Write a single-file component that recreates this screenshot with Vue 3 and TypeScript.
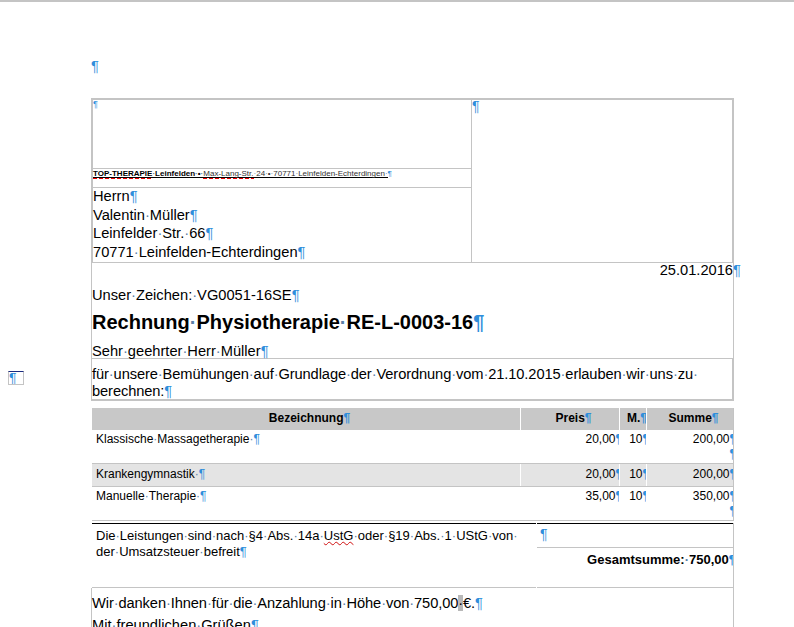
<script setup lang="ts">
import { h, type FunctionalComponent } from 'vue'

// Renders text with Word's formatting marks (spaces and pilcrows) picked out in blue.
const T: FunctionalComponent<{ t: string }> = (props) =>
  props.t.split(/([·¶])/).filter(Boolean).map((part) =>
    part === '·'
      ? h('span', { class: 'dot' }, '·')
      : part === '¶'
        ? h('span', { class: 'mark' }, '¶')
        : part
  )

const rows = [
  { name: 'Klassische·Massagetherapie·¶', price: '20,00¶', qty: '10¶', sum: '200,00¶', tall: true, shade: false },
  { name: 'Krankengymnastik·¶', price: '20,00¶', qty: '10¶', sum: '200,00¶', tall: false, shade: true },
  { name: 'Manuelle·Therapie·¶', price: '35,00¶', qty: '10¶', sum: '350,00¶', tall: true, shade: false }
]
</script>

<template>
  <div class="screen">
    <div class="top-rule"></div>
    <div class="margin-frame"><span class="mark">¶</span></div>
    <main class="page">
      <p class="first-mark"><span class="mark">¶</span></p>

      <section class="head-table">
        <div class="sender">
          <div class="logo-cell"><span class="mark tiny">¶</span></div>
          <div class="return-line">
            <span class="under bold"><span class="dash">TOP-THERAPIE</span><T t="·Leinfelden·•·" /></span>
            <span class="under soft"><span class="dash">Max-Lang-Str.</span><T t="·24·•·70771·Leinfelden-Echterdingen·" /></span><span class="mark">¶</span>
          </div>
          <div class="address">
            <div><T t="Herrn¶" /></div>
            <div><T t="Valentin·Müller¶" /></div>
            <div><T t="Leinfelder·Str.·66¶" /></div>
            <div><T t="70771·Leinfelden-Echterdingen¶" /></div>
          </div>
        </div>
        <div class="recipient"><span class="mark">¶</span></div>
      </section>

      <section class="letter-head">
        <div class="date"><span>25.01.2016</span><span class="mark hang">¶</span></div>
        <div class="ref"><T t="Unser·Zeichen:·VG0051-16SE¶" /></div>
        <h1><T t="Rechnung·Physiotherapie·RE-L-0003-16¶" /></h1>
        <div class="salute"><T t="Sehr·geehrter·Herr·Müller¶" /></div>
      </section>

      <section class="intro">
        <div><T t="für·unsere·Bemühungen·auf·Grundlage·der·Verordnung·vom·21.10.2015·erlauben·wir·uns·zu·" /></div>
        <div><T t="berechnen:¶" /></div>
      </section>

      <section class="items">
        <div class="row header">
          <div class="c name"><T t="Bezeichnung¶" /></div>
          <div class="c price"><T t="Preis¶" /></div>
          <div class="c qty"><T t="M.¶" /></div>
          <div class="c sum"><T t="Summe¶" /></div>
        </div>
        <div v-for="r in rows" :key="r.name" class="row" :class="{ tall: r.tall, shade: r.shade }">
          <div class="c name"><T :t="r.name" /></div>
          <div class="c price"><T :t="r.price" /></div>
          <div class="c qty"><T :t="r.qty" /></div>
          <div class="c sum">
            <T :t="r.sum" />
            <div v-if="r.tall" class="extra"><span class="mark">¶</span></div>
          </div>
        </div>
      </section>

      <section class="totals">
        <div class="note">
          <div class="note-line"><T t="Die·Leistungen·sind·nach·§4·Abs.·14a·" /><span class="wavy">UstG</span><T t="·oder·§19·Abs.·1·UStG·von·" /></div>
          <div class="note-line"><T t="der·Umsatzsteuer·befreit¶" /></div>
        </div>
        <div class="total-col">
          <div class="empty"><span class="mark">¶</span></div>
          <div class="grand"><T t="Gesamtsumme:·750,00¶" /></div>
        </div>
      </section>

      <section class="closing">
        <div class="thanks"><T t="Wir·danken·Ihnen·für·die·Anzahlung·in·Höhe·von·750,00" /><span class="sel">·</span><T t="€.¶" /></div>
        <div class="regards"><T t="Mit·freundlichen·Grüßen¶" /></div>
      </section>
    </main>
  </div>
</template>

<style>
html, body { margin: 0; height: 627px; overflow: hidden; background: #fff; }
</style>

<style scoped>
.screen {
  position: relative;
  height: 627px;
  overflow: hidden;
  background: #fff;
  color: #000;
  font-family: "Liberation Sans", Arial, sans-serif;
  font-size: 14.67px;
}
.top-rule { height: 2px; background: #c4c4c4; }
.margin-frame {
  position: absolute;
  left: 8px;
  top: 371px;
  width: 14px;
  height: 12px;
  border: 1px solid #c4c4c4;
  border-top: 1px solid #1a2a80;
  line-height: 13px;
  font-size: 14px;
  overflow: hidden;
}
.page { margin-left: 91px; width: 643px; }
:deep(.dot) { color: #5b7fa8; }
:deep(.mark) { color: #2f8edb; }
.first-mark { margin: 0; height: 96px; box-sizing: border-box; padding: 55px 0 0 0; line-height: 18px; }
.head-table {
  display: grid;
  grid-template-columns: 379px 1fr;
  height: 165px;
  box-sizing: border-box;
  border: 1px solid #c4c4c4;
  border-top-width: 2px;
  border-right-width: 2px;
  border-left-width: 2px;
}
.sender { display: flex; flex-direction: column; border-right: 1px solid #c4c4c4; }
.logo-cell { height: 68px; border-bottom: 1px solid #c4c4c4; line-height: 5px; }
.tiny { font-size: 9px; }
.return-line {
  height: 18px;
  border-bottom: 1px solid #c4c4c4;
  font-size: 8px;
  line-height: 10px;
  white-space: nowrap;
}
.under { border-bottom: 1px solid #000; display: inline-block; line-height: 7px; margin-top: 1px; }
.bold { font-weight: 700; }
.soft { color: #333; }
.dash { position: relative; display: inline-block; }
.dash::after {
  content: "";
  position: absolute;
  left: 0;
  right: 0;
  bottom: -2px;
  height: 1px;
  background: repeating-linear-gradient(90deg, #f00000 0 4px, transparent 4px 6px);
}
.address { line-height: 18.7px; margin-top: -1px; white-space: nowrap; }
.recipient { line-height: 12px; font-size: 14px; }
.letter-head {
  height: 96px;
  border-right: 1px solid #c4c4c4;
  border-left: 1px solid #c4c4c4;
  border-bottom: 1px solid #c4c4c4;
  box-sizing: border-box;
  white-space: nowrap;
}
.date { text-align: right; line-height: 14px; position: relative; }
.hang { position: absolute; left: 100%; top: 0; }
.ref { margin-top: 9px; line-height: 18px; }
h1 { margin: 5px 0 0; font-size: 20px; line-height: 26px; font-weight: 700; }
.salute { margin-top: 7px; line-height: 18px; }
.intro {
  height: 42px;
  box-sizing: border-box;
  border-right: 2px solid #c4c4c4;
  border-left: 1px solid #c4c4c4;
  border-bottom: 2px solid #c4c4c4;
  line-height: 17px;
  padding-top: 7px;
  white-space: nowrap;
  letter-spacing: -0.1px;
}
.items {
  margin-top: 7px;
  border-right: 1px solid #c4c4c4;
  font-size: 12px;
}
.row {
  display: grid;
  grid-template-columns: 429px 99px 27px 86px;
  height: 23px;
  margin-left: 1px;
  box-sizing: border-box;
  border-bottom: 1px solid #c4c4c4;
}
.row.header { height: 22px; background: #c8c8c8; font-weight: 700; border-bottom: 0; }
.row.tall { height: 34px; }
.row.shade { background: #e4e4e4; }
.c { padding-top: 3px; line-height: 15px; white-space: nowrap; border-right: 1px solid #fff; box-sizing: border-box; overflow: hidden; }
.row.tall .c { padding-top: 2px; }
.row .c:last-child { border-right: 0; }
.name { padding-left: 4px; }
.price, .qty, .sum { text-align: right; }
.row:not(.header) .c :deep(.mark) { margin-right: -3px; }
.row:not(.header) .name :deep(.mark) { margin-right: 0; }
.header .c { text-align: center; padding-left: 7px; }
.extra { line-height: 14px; }
.totals {
  display: grid;
  grid-template-columns: 444px 1fr;
  margin-top: 2px;
  margin-left: 1px;
  height: 65px;
  box-sizing: border-box;
  border-right: 1px solid #c4c4c4;
  font-size: 13px;
}
.note {
  padding: 4px 0 0 4px;
  line-height: 16px;
  white-space: nowrap;
  border-top: 1px solid #000;
  border-bottom: 1px solid #c4c4c4;
}
.note-line { height: 16px; }
.wavy { text-decoration: underline wavy #d01010 1px; }
.total-col { display: flex; flex-direction: column; margin-left: 1px; border-top: 1px solid #000; border-bottom: 1px solid #c4c4c4; }
.empty { height: 24px; box-sizing: border-box; border-bottom: 1px solid #c4c4c4; padding: 2px 0 0 3px; line-height: 17px; font-size: 14px; }
.grand { text-align: right; font-weight: 700; line-height: 15px; padding-top: 4px; white-space: nowrap; overflow: hidden; }
.grand :deep(.mark) { margin-right: -3px; }
.closing {
  border-right: 1px solid #c4c4c4;
  border-left: 1px solid #c4c4c4;
  height: 40px;
  padding-top: 6px;
  box-sizing: border-box;
  line-height: 18px;
  white-space: nowrap;
}
.thanks { letter-spacing: -0.1px; }
.sel { background: #b8b8b8; }
.regards { margin-top: 4px; }
</style>
